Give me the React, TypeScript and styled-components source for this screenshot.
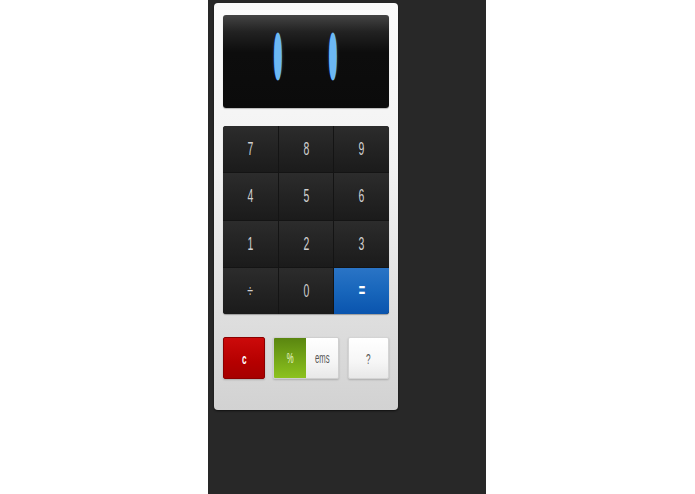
import React from "react";
import styled, { createGlobalStyle } from "styled-components";

const GlobalStyle = createGlobalStyle`
  html, body {
    margin: 0;
    padding: 0;
    background: #ffffff;
    font-family: "Liberation Sans", Arial, sans-serif;
  }
`;

const Page = styled.div`
  width: 695px;
  height: 494px;
  display: flex;
  padding-left: 208px;
  box-sizing: border-box;
`;

const Stage = styled.div`
  width: 278px;
  height: 494px;
  background: #282828;
  padding: 3px 0 0 6px;
  box-sizing: border-box;
`;

const Panel = styled.div`
  width: 184px;
  height: 407px;
  box-sizing: border-box;
  padding: 12px 9px 0 9px;
  border-radius: 4px;
  background: linear-gradient(to bottom, #fbfbfb 0%, #f2f2f2 40%, #d2d2d2 100%);
  box-shadow: 0 1px 2px rgba(0, 0, 0, 0.6);
  display: flex;
  flex-direction: column;
`;

const Display = styled.div`
  height: 93px;
  border-radius: 3px;
  background: linear-gradient(to bottom, #444 0%, #222 18%, #0d0d0d 40%, #0b0b0b 100%);
  box-shadow: 0 1px 1px rgba(0, 0, 0, 0.25);
  display: flex;
  justify-content: center;
  align-items: center;
  gap: 48px;
  padding-right: 7px;
  overflow: hidden;
`;

const Digit = styled.span`
  display: inline-block;
  font-family: "DejaVu Sans", sans-serif;
  font-weight: 700;
  font-size: 48px;
  line-height: 1;
  color: #6cb8f4;
  transform: scaleX(0.19);
  width: 7px;
  text-align: center;
  -webkit-text-stroke: 12px #6cb8f4;
  text-shadow: 0 0 8px rgba(108, 184, 244, 0.8);
  margin-top: -10px;
`;

const Keypad = styled.div`
  margin-top: 18px;
  height: 188px;
  border-radius: 3px;
  overflow: hidden;
  display: grid;
  grid-template-columns: repeat(3, 1fr);
  grid-template-rows: repeat(4, 1fr);
  background: #141414;
  gap: 1px;
  box-shadow: 0 1px 1px rgba(0, 0, 0, 0.3);
`;

const Key = styled.div<{ $accent?: boolean }>`
  display: flex;
  align-items: center;
  justify-content: center;
  background: ${(p) =>
    p.$accent
      ? "linear-gradient(to bottom, #2a74c6 0%, #1866bb 50%, #0a54ae 100%)"
      : "linear-gradient(to bottom, #2c2c2c 0%, #232323 50%, #1b1b1b 100%)"};
  color: ${(p) => (p.$accent ? "#ffffff" : "#d0d0d0")};
  font-size: ${(p) => (p.$accent ? "20px" : "19px")};
  font-weight: ${(p) => (p.$accent ? 700 : 400)};
`;

const Label = styled.span`
  display: inline-block;
  transform: scaleX(0.55);
`;

const Controls = styled.div`
  margin-top: 23px;
  height: 42px;
  display: flex;
  align-items: stretch;
`;

const Button = styled.div<{ $tone: "red" | "light" }>`
  width: ${(p) => (p.$tone === "red" ? "42px" : "41px")};
  box-sizing: border-box;
  border-radius: 2px;
  display: flex;
  align-items: center;
  justify-content: center;
  font-size: 15px;
  font-weight: ${(p) => (p.$tone === "red" ? 700 : 400)};
  color: ${(p) => (p.$tone === "red" ? "#ffffff" : "#555")};
  border: 1px solid ${(p) => (p.$tone === "red" ? "#8a0000" : "#d4d4d4")};
  background: ${(p) =>
    p.$tone === "red"
      ? "linear-gradient(to bottom, #cc0a0a 0%, #b50000 60%, #a60000 100%)"
      : "linear-gradient(to bottom, #ffffff 0%, #f6f6f6 60%, #e8e8e8 100%)"};
  box-shadow: 0 1px 2px rgba(0, 0, 0, 0.2);
`;

const Toggle = styled.div`
  margin: 0 9px 0 8px;
  width: 66px;
  display: flex;
  border-radius: 2px;
  overflow: hidden;
  border: 1px solid #cfcfcf;
  box-sizing: border-box;
  box-shadow: 0 1px 2px rgba(0, 0, 0, 0.2);
`;

const ToggleHalf = styled.div<{ $on?: boolean }>`
  flex: 1;
  display: flex;
  align-items: center;
  justify-content: center;
  font-size: 14px;
  color: ${(p) => (p.$on ? "#e8f4c8" : "#555")};
  background: ${(p) =>
    p.$on
      ? "linear-gradient(to bottom, #5a8610 0%, #76a818 55%, #8cc21e 100%)"
      : "linear-gradient(to bottom, #ffffff 0%, #f5f5f5 60%, #e8e8e8 100%)"};
`;

const keys = ["7", "8", "9", "4", "5", "6", "1", "2", "3", "÷", "0", "="];

export default function App() {
  return (
    <Page>
      <GlobalStyle />
      <Stage>
        <Panel>
          <Display>
            <Digit>0</Digit>
            <Digit>0</Digit>
          </Display>
          <Keypad>
            {keys.map((k) => (
              <Key key={k} $accent={k === "="}>
                <Label>{k}</Label>
              </Key>
            ))}
          </Keypad>
          <Controls>
            <Button $tone="red">
              <Label>c</Label>
            </Button>
            <Toggle>
              <ToggleHalf $on>
                <Label>%</Label>
              </ToggleHalf>
              <ToggleHalf>
                <Label>ems</Label>
              </ToggleHalf>
            </Toggle>
            <Button $tone="light">
              <Label>?</Label>
            </Button>
          </Controls>
        </Panel>
      </Stage>
    </Page>
  );
}
